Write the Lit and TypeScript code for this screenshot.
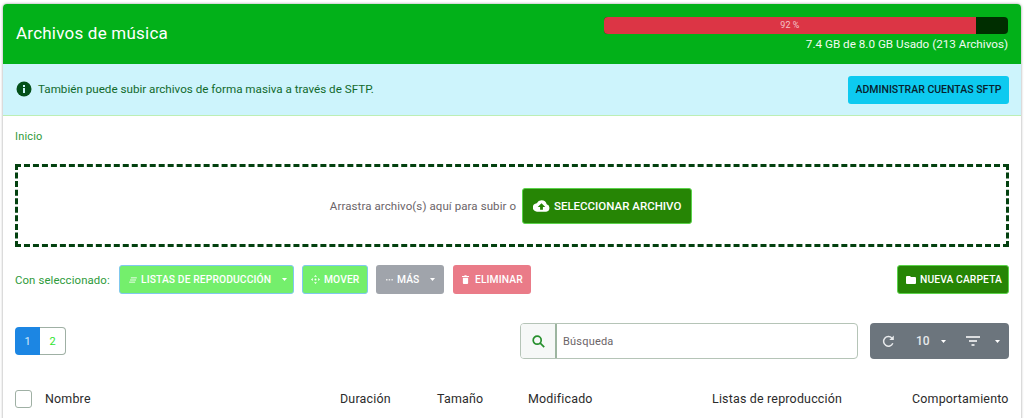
import { LitElement, html, css } from "lit";
import { customElement } from "lit/decorators.js";

const caret = html`<svg class="caret" width="5" height="3" viewBox="0 0 5 3"><path d="M0 0h5L2.500 3z" fill="currentColor"/></svg>`;

@customElement("app-root")
export class AppRoot extends LitElement {
  static styles = css`
    :host { display: block; height: 418px; overflow: hidden; background: #fff; font-family: Roboto, sans-serif; }
    * { box-sizing: border-box; }
    .page { padding: 4px 3px 0; }
    .card { border-radius: 4px 4px 0 0; background: #fff; box-shadow: 0 0 3px rgba(0,0,0,.4); height: 430px; }
    .head { height: 60px; background: #02b119; border-radius: 4px 4px 0 0; color: #fff; display: flex; justify-content: space-between; align-items: flex-start; padding: 13px 13px 0 13px; }
    h1 { margin: 0; font-size: 17px; font-weight: 400; line-height: 32px; letter-spacing: .22px; }
    .usage { width: 404px; text-align: right; }
    .bar { height: 17px; background: #002e00; border-radius: 4px; overflow: hidden; }
    .fill { height: 100%; background: #dc3545; color: #f3c3c8; font-size: 9px; line-height: 17px; text-align: center; }
    .usage-text { font-size: 11.7px; line-height: 14px; margin-top: 3px; color: #f1fbf2; }
    .alert { height: 52px; background: #cdf4fc; border-bottom: 1px solid #bdeeb5; display: flex; align-items: center; justify-content: space-between; padding: 0 12px 0 13px; color: #116a2c; font-size: 11.65px; }
    .alert-l { display: flex; align-items: center; gap: 6px; padding-bottom: 1px; }
    .sftp { height: 28px; width: 161px; border-radius: 3px; background: #0dcaf0; color: #06222e; font-size: 10.5px; font-weight: 500; display: flex; align-items: center; justify-content: center; }
    .body { padding: 0 12px; }
    .crumb { height: 48px; display: flex; align-items: center; font-size: 11px; color: #2e9a3a; letter-spacing: .17px; padding-bottom: 8px; }
    .drop { height: 83px; border: 3px dashed #03410f; display: flex; align-items: center; justify-content: center; gap: 6px; color: #6b6468; font-size: 11.5px; letter-spacing: .09px; padding-right: 2px; }
    .btn { display: inline-flex; align-items: center; border-radius: 3px; color: #fff; font-weight: 500; font-size: 10.3px; height: 29px; gap: 4px; white-space: nowrap; }
    .upload { height: 36px; width: 170px; background: #268505; border: 1px solid #5ad34a; font-size: 11.5px; justify-content: center; gap: 4px; letter-spacing: 0; }
    .tools { display: flex; align-items: center; height: 29px; margin-top: 18px; font-size: 11.4px; color: #2e9a3a; letter-spacing: .1px; }
    .tools .label { width: 104px; flex: none; }
    .lite { background: #74ef6c; border: 1px solid #80c8ee; color: #fff; }
    .gray { background: #a0a4ab; }
    .red { background: #ea7b88; }
    .dark { background: #268505; border: 1px solid #5ad34a; }
    .b1 { width: 175px; padding-left: 9px; }
    .b1 .caret { margin-left: 7px; }
    .b2 { width: 66px; margin-left: 8px; padding-left: 8px; }
    .b3 { width: 68px; margin-left: 8px; padding-left: 10px; }
    .b3 .caret { margin-left: 7px; }
    .b4 { width: 78px; margin-left: 9px; padding-left: 9px; gap: 6px; }
    .b5 { width: 112px; margin-left: auto; padding-left: 8px; }
    .row { display: flex; align-items: center; height: 36px; margin-top: 29px; }
    .pager { display: flex; height: 28px; font-size: 11px; }
    .pager span { width: 26px; display: flex; align-items: center; justify-content: center; }
    .p1 { background: #1c86e3; color: #d5e9fa; border-radius: 4px 0 0 4px; width: 25px !important; }
    .p2 { color: #2fe42f; border: 1px solid #9fb0a4; border-left: none; border-radius: 0 4px 4px 0; }
    .search { margin-left: auto; width: 338px; height: 36px; display: flex; border: 1px solid #b5c4b7; border-radius: 4px; font-size: 11px; color: #6b6468; letter-spacing: .2px; }
    .search i { width: 36px; background: #f6f8f7; border-right: 2px solid #9db5a0; border-radius: 3px 0 0 3px; display: flex; align-items: center; justify-content: center; }
    .search span { display: flex; align-items: center; padding-left: 6px; }
    .ctl { width: 139px; height: 36px; margin-left: 12px; background: #6c757d; border-radius: 4px; color: #fff; display: flex; align-items: center; font-size: 12px; font-weight: 500; padding-left: 12px; }
    .ctl .ten { margin-left: 21px; color: #e6e8ea; }
    .ctl .c1 { margin-left: 11px; }
    .ctl .flt { margin-left: 20px; }
    .ctl .c2 { margin-left: 15px; }
    .thead { display: flex; align-items: center; height: 20px; margin-top: 29px; font-size: 12.45px; color: #2b2b2b; letter-spacing: .19px; }
    .check { width: 17px; height: 18px; border: 1px solid #9fb0a4; border-radius: 3px; flex: none; margin-top: 2px; }
    .thead span { flex: none; }
    .n1 { margin-left: 13px; width: 295px; }
    .n2 { width: 97px; }
    .n3 { width: 91px; }
    .n4 { width: 184px; }
    .n5 { width: 200px; }
  `;

  render() {
    return html`<div class="page"><div class="card">
      <div class="head">
        <h1>Archivos de música</h1>
        <div class="usage">
          <div class="bar"><div class="fill" style="width:92%">92 %</div></div>
          <div class="usage-text">7.4 GB de 8.0 GB Usado (213 Archivos)</div>
        </div>
      </div>
      <div class="alert">
        <div class="alert-l">
          <svg width="16" height="16" viewBox="0 0 16 16"><circle cx="8" cy="8" r="7.500" fill="#04501a"/><rect x="7" y="7" width="2" height="5" fill="#cdf4fc"/><rect x="7" y="4" width="2" height="2" fill="#cdf4fc"/></svg>
          También puede subir archivos de forma masiva a través de SFTP.
        </div>
        <div class="sftp">ADMINISTRAR CUENTAS SFTP</div>
      </div>
      <div class="body">
        <div class="crumb">Inicio</div>
        <div class="drop">
          Arrastra archivo(s) aquí para subir o
          <div class="btn upload">
            <svg width="17" height="13" viewBox="0 0 18 13"><path d="M14.500 5.200A5.600 5.600 0 0 0 9 1a5.600 5.600 0 0 0-5 3A4.500 4.500 0 0 0 4.500 13h9.500a4 4 0 0 0 .5-7.800z" fill="#fff"/><path d="M9 4l4 4h-2.500v3h-3V8H5z" fill="#268505"/></svg>
            SELECCIONAR ARCHIVO
          </div>
        </div>
        <div class="tools">
          <span class="label">Con seleccionado:</span>
          <div class="btn lite b1">
            <svg width="8" height="6" viewBox="0 0 9 7"><path d="M2 1h7M1 3.500h7M0 6h7" stroke="#fff" fill="none"/></svg>
            LISTAS DE REPRODUCCIÓN ${caret}
          </div>
          <div class="btn lite b2">
            <svg width="9" height="9" viewBox="0 0 9 9" fill="#fff"><path d="M4.500 0L6 1.800H3zM4.500 9L3 7.200h3zM0 4.500L1.800 3v3zM9 4.500L7.200 6V3z"/><circle cx="4.500" cy="4.500" r="1"/></svg>
            MOVER
          </div>
          <div class="btn gray b3">
            <svg width="7" height="2" viewBox="0 0 7 2" fill="#e8e8e8"><path d="M0 0h1.500v1.500H0zM2.700 0h1.500v1.500H2.700zM5.400 0h1.500v1.500H5.400z"/></svg>
            MÁS ${caret}
          </div>
          <div class="btn red b4">
            <svg width="7" height="9" viewBox="0 0 8 10" fill="#fff"><path d="M0 1h2.500l.5-1h2l.5 1H8v1H0zM1 3h6v6a1 1 0 0 1-1 1H2a1 1 0 0 1-1-1z"/></svg>
            ELIMINAR
          </div>
          <div class="btn dark b5">
            <svg width="10" height="8" viewBox="0 0 10 8" fill="#fff"><path d="M0 1a1 1 0 0 1 1-1h3l1 1h4a1 1 0 0 1 1 1v5a1 1 0 0 1-1 1H1a1 1 0 0 1-1-1z"/></svg>
            NUEVA CARPETA
          </div>
        </div>
        <div class="row">
          <div class="pager"><span class="p1">1</span><span class="p2">2</span></div>
          <div class="search">
            <i><svg width="13" height="13" viewBox="0 0 13 13" fill="none" stroke="#268f2c" stroke-width="1.700"><circle cx="5.200" cy="5.200" r="4"/><path d="M8.200 8.200L12.200 12.200"/></svg></i>
            <span>Búsqueda</span>
          </div>
          <div class="ctl">
            <svg width="13" height="13" viewBox="0 0 13 13"><path d="M10.800 8.300A4.800 4.800 0 1 1 10 3.200" fill="none" stroke="#e8eaec" stroke-width="1.500"/><path d="M11.800 .5v4.500H7.300z" fill="#e8eaec"/></svg>
            <span class="ten">10</span>
            <svg class="c1" width="5" height="3" viewBox="0 0 5 3"><path d="M0 0h5L2.500 3z" fill="#fff"/></svg>
            <svg class="flt" width="14" height="10" viewBox="0 0 14 10"><path d="M0 1h14M3 5h8M5.500 9h3" stroke="#fff" stroke-width="1.300"/></svg>
            <svg class="c2" width="5" height="3" viewBox="0 0 5 3"><path d="M0 0h5L2.500 3z" fill="#fff"/></svg>
          </div>
        </div>
        <div class="thead">
          <div class="check"></div>
          <span class="n1">Nombre</span><span class="n2">Duración</span><span class="n3">Tamaño</span><span class="n4">Modificado</span><span class="n5">Listas de reproducción</span><span>Comportamiento</span>
        </div>
      </div>
    </div></div>`;
  }
}
